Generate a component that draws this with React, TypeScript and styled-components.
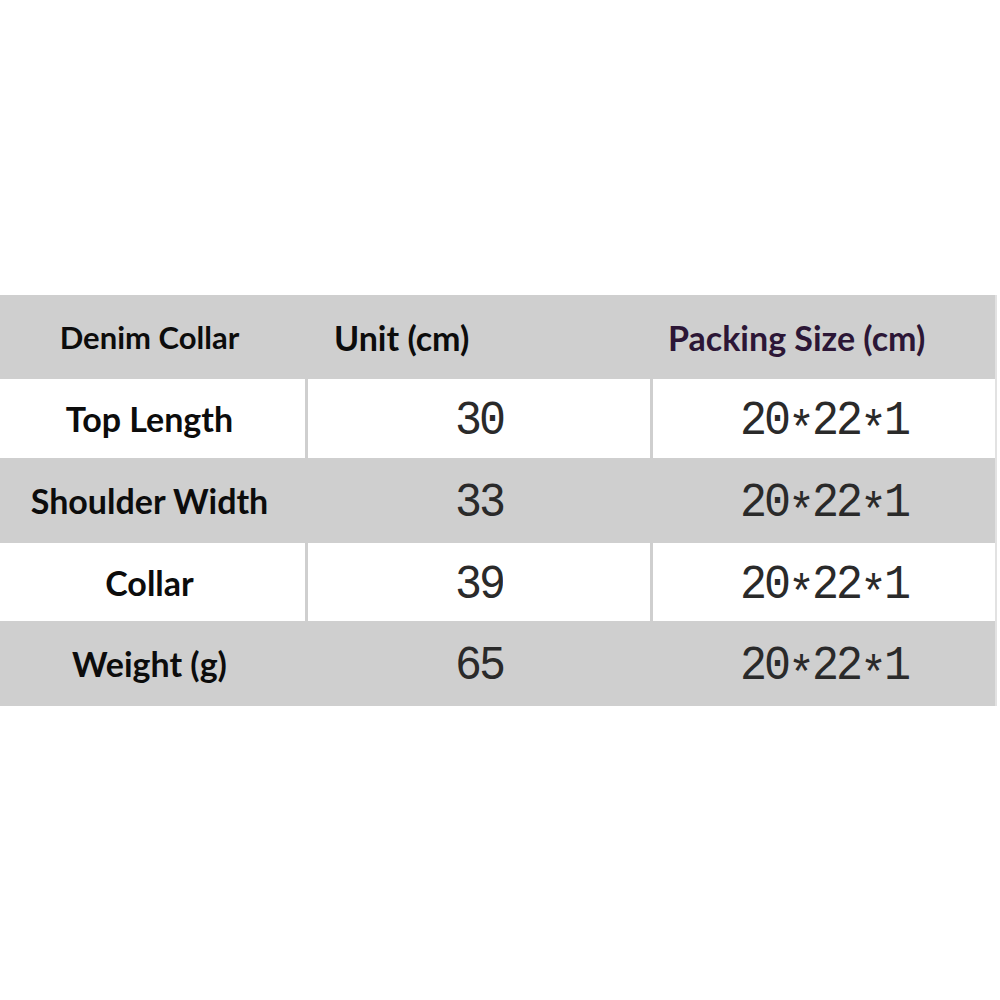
import React from "react";
import styled, { createGlobalStyle } from "styled-components";

const Global = createGlobalStyle`
  html, body { margin: 0; padding: 0; background: #ffffff; }
  body { width: 1000px; height: 1000px; overflow: hidden; }
`;

const Page = styled.div`
  width: 1000px;
  height: 1000px;
  padding-top: 295px;
  box-sizing: border-box;
  background: #ffffff;
`;

const Table = styled.div`
  width: 997px;
  display: flex;
  flex-direction: column;
  background: #cfcfcf;
  border-right: 2px solid #e2e2e2;
  box-sizing: border-box;
`;

const Row = styled.div<{ $h: number }>`
  display: grid;
  grid-template-columns: 305px 342px 342px;
  column-gap: 3px;
  height: ${(p) => p.$h}px;
`;

const Cell = styled.div<{ $white?: boolean; $justify?: string; $pad?: number }>`
  display: flex;
  align-items: center;
  justify-content: ${(p) => p.$justify || "center"};
  padding-left: ${(p) => p.$pad || 0}px;
  background: ${(p) => (p.$white ? "#ffffff" : "transparent")};
  box-sizing: border-box;
`;

const Label = styled.span<{ $size?: number; $color?: string }>`
  font-family: Lato, "Open Sans", sans-serif;
  font-weight: 700;
  font-size: ${(p) => p.$size || 34}px;
  color: ${(p) => p.$color || "#0c0c0c"};
  white-space: nowrap;
  margin-right: 6px;
`;

const Value = styled.span`
  font-family: "Liberation Mono", "DejaVu Sans Mono", monospace;
  font-size: 45px;
  letter-spacing: -3px;
  color: #2a2a2a;
  white-space: nowrap;
  transform: scaleY(1.08);
  margin-top: 6px;
  display: inline-flex;
  align-items: baseline;
`;

const Star = styled.span`
  display: inline-block;
  transform: translateY(9px);
`;

const rows = [
  { label: "Top Length", unit: "30", white: true, h: 79 },
  { label: "Shoulder Width", unit: "33", white: false, h: 85 },
  { label: "Collar", unit: "39", white: true, h: 78 },
  { label: "Weight (g)", unit: "65", white: false, h: 85 },
];

function Pack() {
  return (
    <Value>
      20<Star>*</Star>22<Star>*</Star>1
    </Value>
  );
}

export default function App() {
  return (
    <>
      <Global />
      <Page>
        <Table>
          <Row $h={84}>
            <Cell>
              <Label $size={31}>Denim Collar</Label>
            </Cell>
            <Cell $justify="flex-start" $pad={26}>
              <Label>Unit (cm)</Label>
            </Cell>
            <Cell $justify="flex-start" $pad={15}>
              <Label $color="#2c1636">Packing Size (cm)</Label>
            </Cell>
          </Row>
          {rows.map((r) => (
            <Row key={r.label} $h={r.h}>
              <Cell $white={r.white}>
                <Label>{r.label}</Label>
              </Cell>
              <Cell $white={r.white}>
                <Value>{r.unit}</Value>
              </Cell>
              <Cell $white={r.white}>
                <Pack />
              </Cell>
            </Row>
          ))}
        </Table>
      </Page>
    </>
  );
}
